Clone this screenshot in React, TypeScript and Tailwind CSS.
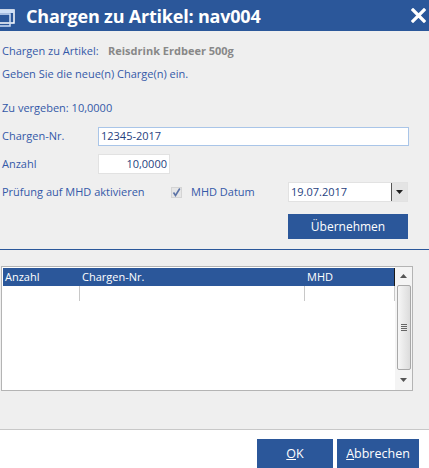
import React from "react";

const blue = "bg-[#2b579a]";

function WindowIcon() {
  return (
    <svg width="16" height="22" viewBox="0 0 16 22" className="shrink-0">
      <rect x="-4" y="5" width="18" height="13" fill="none" stroke="#ffffff" strokeWidth="1.5" />
      <rect x="-8" y="9" width="18" height="12" fill="none" stroke="#cfe0f7" strokeWidth="1.5" />
      <rect x="-4" y="5" width="18" height="3" fill="#cfe0f7" />
    </svg>
  );
}

function CloseIcon() {
  return (
    <svg width="15" height="15" viewBox="0 0 15 15">
      <path d="M2 2 L13 13 M13 2 L2 13" stroke="#ffffff" strokeWidth="3.2" strokeLinecap="square" />
    </svg>
  );
}

function Check() {
  return (
    <svg width="11" height="11" viewBox="0 0 11 11" className="shrink-0">
      <rect x="0.5" y="0.5" width="10" height="10" fill="#e6e6e6" stroke="#d4d4d4" />
      <path d="M2.5 5.5 L4.5 8.5 L8.8 1.5" fill="none" stroke="#5c73a6" strokeWidth="1.6" />
    </svg>
  );
}

export default function App() {
  return (
    <div
      className="w-[429px] h-[468px] overflow-hidden bg-[#efefef] flex flex-col text-[11px] text-[#3459a8]"
      style={{ fontFamily: '"Open Sans", "Noto Sans", sans-serif' }}
    >
      {/* title bar */}
      <div className={`${blue} h-[31px] shrink-0 flex items-center`}>
        <WindowIcon />
        <div className="ml-[10px] text-white font-bold text-[18px] leading-none tracking-[-0.2px]">
          Chargen zu Artikel: nav004
        </div>
        <div className="ml-auto mr-[3px] flex items-center">
          <CloseIcon />
        </div>
      </div>

      {/* form */}
      <div className="flex flex-col pl-[2px] pt-[12px]">
        <div className="h-[16px] flex items-center">
          <span className="w-[106px]">Chargen zu Artikel:</span>
          <span className="font-bold text-[#888888]">Reisdrink Erdbeer 500g</span>
        </div>
        <div className="h-[16px] mt-[7px] flex items-center">Geben Sie die neue(n) Charge(n) ein.</div>
        <div className="h-[16px] mt-[18px] flex items-center">Zu vergeben: 10,0000</div>

        <div className="mt-[11px] flex items-center h-[19px]">
          <span className="w-[96px]">Chargen-Nr.</span>
          <div className="w-[311px] h-[19px] bg-white border border-[#a9c5e8] flex items-center px-[2px] text-[#1f3f80]">
            12345-2017
          </div>
        </div>

        <div className="mt-[8px] flex items-center h-[20px]">
          <span className="w-[96px]">Anzahl</span>
          <div className="w-[72px] h-[20px] bg-white border border-[#e2e2e2] flex items-center justify-end px-[2px] text-[#1f3f80]">
            10,0000
          </div>
        </div>

        <div className="mt-[8px] flex items-center h-[20px]">
          <span className="w-[169px]">Prüfung auf MHD aktivieren</span>
          <Check />
          <span className="ml-[9px] w-[97px]">MHD Datum</span>
          <div className="w-[120px] h-[20px] bg-white border border-[#e2e2e2] flex items-center text-[#1f3f80]">
            <span className="pl-[2px] flex-1">19.07.2017</span>
            <div className="w-[16px] h-[18px] border-l border-[#555555] bg-[#e4e4e4] flex items-center justify-center">
              <svg width="7" height="4" viewBox="0 0 7 4">
                <path d="M0 0 L7 0 L3.5 4 Z" fill="#222222" />
              </svg>
            </div>
          </div>
        </div>

        <div className="mt-[12px] flex">
          <div className="ml-[286px] w-[120px] h-[25px] bg-[#2b579a] text-white text-[12px] flex items-center justify-center">
            Übernehmen
          </div>
        </div>
      </div>

      <div className="mt-[10px] h-[1px] bg-[#2b579a] shrink-0" />

      {/* grid */}
      <div className="ml-[1px] mt-[16px] w-[412px] h-[125px] border border-[#b4b4b4] bg-white flex shrink-0">
        <div className="flex-1 flex flex-col">
          <div className="h-[18px] mt-[1px] ml-[1px] bg-[#2b579a] text-white flex items-center border-r border-[#1a1a1a]">
            <span className="w-[77px] pl-[2px]">Anzahl</span>
            <span className="w-[225px] pl-[2px]">Chargen-Nr.</span>
            <span className="pl-[2px]">MHD</span>
          </div>
          <div className="h-[15px] flex ml-[1px]">
            <div className="w-[77px] border-r border-[#c8c8c8]" />
            <div className="w-[225px] border-r border-[#c8c8c8]" />
            <div className="flex-1 border-r border-[#c8c8c8]" />
          </div>
        </div>
        <div className="w-[17px] bg-[#f4f4f4] flex flex-col items-center">
          <div className="h-[18px] flex items-center justify-center">
            <svg width="7" height="4" viewBox="0 0 7 4">
              <path d="M0 4 L7 4 L3.5 0 Z" fill="#555555" />
            </svg>
          </div>
          <div className="w-[14px] h-[85px] rounded-[2px] border border-[#a8a8a8] bg-gradient-to-r from-[#f6f6f6] to-[#dcdcdc] flex flex-col items-center justify-center gap-[1px]">
            <div className="w-[6px] h-[1px] bg-[#666666]" />
            <div className="w-[6px] h-[1px] bg-[#666666]" />
            <div className="w-[6px] h-[1px] bg-[#666666]" />
            <div className="w-[6px] h-[1px] bg-[#666666]" />
          </div>
          <div className="flex-1 flex items-center justify-center">
            <svg width="7" height="4" viewBox="0 0 7 4">
              <path d="M0 0 L7 0 L3.5 4 Z" fill="#555555" />
            </svg>
          </div>
        </div>
      </div>

      <div className="flex-1" />

      {/* footer */}
      <div className="h-[39px] shrink-0 bg-white border-t border-[#c8c8c8] flex items-start justify-end pt-[9px] pr-[10px] gap-[4px]">
        <div className="w-[76px] h-[32px] bg-[#2b579a] text-white text-[12.5px] flex items-start justify-center pt-[6px]">
          <span>
            <span className="underline">O</span>K
          </span>
        </div>
        <div className="w-[82px] h-[32px] bg-[#2b579a] text-white text-[12.5px] flex items-start justify-center pt-[6px]">
          <span>
            <span className="underline">A</span>bbrechen
          </span>
        </div>
      </div>
    </div>
  );
}
